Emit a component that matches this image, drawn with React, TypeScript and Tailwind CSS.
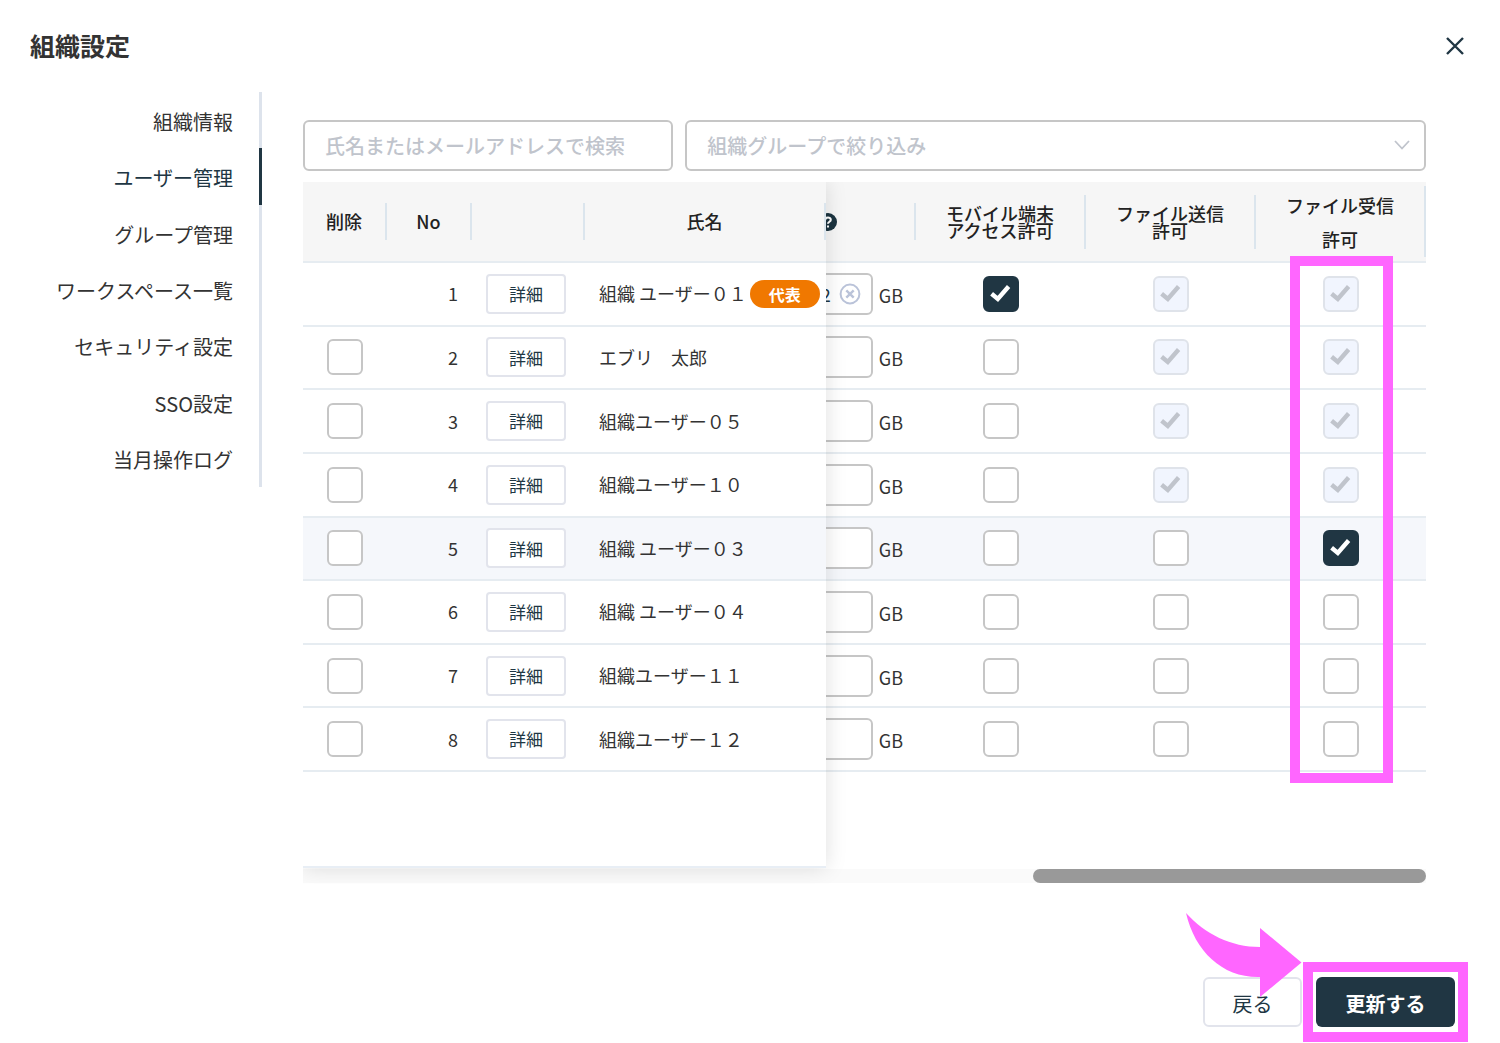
import { useState } from 'react';
import clsx from 'clsx';

type User = {
  no: number;
  name: string;
  owner?: boolean;
  capacity: string;
  mobile: boolean;
  send: boolean;
  receive: boolean;
  locked: boolean;
};

type Flag = 'mobile' | 'send' | 'receive';

const MENU = [
  '組織情報',
  'ユーザー管理',
  'グループ管理',
  'ワークスペース一覧',
  'セキュリティ設定',
  'SSO設定',
  '当月操作ログ',
];

const USERS: User[] = [
  { no: 1, name: '組織 ユーザー０１', owner: true, capacity: '2', mobile: true, send: true, receive: true, locked: true },
  { no: 2, name: 'エブリ　太郎', capacity: '', mobile: false, send: true, receive: true, locked: true },
  { no: 3, name: '組織ユーザー０５', capacity: '', mobile: false, send: true, receive: true, locked: true },
  { no: 4, name: '組織ユーザー１０', capacity: '', mobile: false, send: true, receive: true, locked: true },
  { no: 5, name: '組織 ユーザー０３', capacity: '', mobile: false, send: false, receive: true, locked: false },
  { no: 6, name: '組織 ユーザー０４', capacity: '', mobile: false, send: false, receive: false, locked: false },
  { no: 7, name: '組織ユーザー１１', capacity: '', mobile: false, send: false, receive: false, locked: false },
  { no: 8, name: '組織ユーザー１２', capacity: '', mobile: false, send: false, receive: false, locked: false },
];

const HOVERED = 5;

type CheckProps = {
  label: string;
  checked: boolean;
  disabled?: boolean;
  onChange: () => void;
};

function Check({ label, checked, disabled, onChange }: CheckProps) {
  return (
    <span className="relative inline-block size-9 align-middle">
      <input
        type="checkbox"
        aria-label={label}
        checked={checked}
        disabled={disabled}
        onChange={onChange}
        className="block size-9 appearance-none rounded-md border-2 border-[#c6c6c6] bg-white checked:border-[#203643] checked:bg-[#203643] disabled:border-[#dfe3ea] disabled:bg-[#f1f5fe]"
      />
      {checked && (
        <svg
          viewBox="0 0 36 36"
          className={clsx('pointer-events-none absolute inset-0', disabled ? 'text-[#c0c4cc]' : 'text-white')}
          fill="none"
          stroke="currentColor"
          strokeWidth="4.4"
        >
          <path d="M8.6 17.800 L14.800 23 L25.600 10.500" />
        </svg>
      )}
    </span>
  );
}

type HeadProps = {
  children?: React.ReactNode;
  className?: string;
};

function Head({ children, className }: HeadProps) {
  return (
    <th scope="col" className="h-[81px] border-b-2 border-[#e6ecf1] bg-[#f6f6f6] p-0 font-medium text-[#222]">
      <div className={clsx('flex items-center justify-center border-r-2 border-[#dbe5ed] text-center', className)}>
        {children}
      </div>
    </th>
  );
}

export default function App() {
  const [users, setUsers] = useState<User[]>(USERS);
  const [removed, setRemoved] = useState<number[]>([]);
  const [keyword, setKeyword] = useState('');

  function toggle(no: number, key: Flag) {
    setUsers(users.map((u) => (u.no === no ? { ...u, [key]: !u[key] } : u)));
  }

  function setCapacity(no: number, value: string) {
    setUsers(users.map((u) => (u.no === no ? { ...u, capacity: value } : u)));
  }

  function toggleRemoved(no: number) {
    setRemoved(removed.includes(no) ? removed.filter((n) => n !== no) : [...removed, no]);
  }

  function cell(no: number) {
    return clsx('border-b-2 border-[#e6ecf1] p-0', no === HOVERED ? 'bg-[#f5f7fb]' : 'bg-white');
  }

  return (
    <div className="min-h-screen bg-white font-['Noto_Sans_CJK_JP',sans-serif] text-[18px] text-[#333]">
      <header className="flex h-[92px] items-center justify-between pr-[35px] pl-[30px]">
        <h1 className="text-[25px] font-bold">組織設定</h1>
        <button type="button" aria-label="閉じる" className="text-[#203643]">
          <svg viewBox="0 0 20 20" className="size-5" fill="none" stroke="currentColor" strokeWidth="2.4">
            <path d="M2 2 L18 18 M18 2 L2 18" />
          </svg>
        </button>
      </header>

      <div className="flex items-start">
        <nav className="flex h-[395px] w-[262px] shrink-0 flex-col">
          {MENU.map((item) => (
            <a
              key={item}
              href="#"
              aria-current={item === 'ユーザー管理' ? 'page' : undefined}
              className={clsx(
                'flex flex-1 items-center justify-end border-r-3 pt-[3px] pr-[26px] text-[20px]',
                item === 'ユーザー管理' ? 'border-[#203643] text-[#203643]' : 'border-[#dde3ec]',
              )}
            >
              {item}
            </a>
          ))}
        </nav>

        <main className="min-w-0 flex-1 pt-7 pr-[74px] pl-[41px]">
          {/* Filters */}
          <div className="grid grid-cols-[1fr_2fr] gap-3 text-[20px]">
            <input
              type="text"
              aria-label="氏名またはメールアドレスで検索"
              placeholder="氏名またはメールアドレスで検索"
              value={keyword}
              onChange={(e) => setKeyword(e.target.value)}
              className="h-[51px] w-full min-w-0 rounded-md border-2 border-[#c6c6c6] px-5 font-medium placeholder:text-[#c0c4cc]"
            />
            <div className="relative min-w-0">
              <select
                aria-label="組織グループで絞り込み"
                className="h-[51px] w-full appearance-none rounded-md border-2 border-[#c6c6c6] bg-white px-5 font-medium text-[#c0c4cc]"
              >
                <option>組織グループで絞り込み</option>
              </select>
              <svg
                viewBox="0 0 16 10"
                className="pointer-events-none absolute top-5 right-4 h-[10px] w-4 text-[#c0c4cc]"
                fill="none"
                stroke="currentColor"
                strokeWidth="1.8"
              >
                <path d="M1 1 L8 8.500 L15 1" />
              </svg>
            </div>
          </div>

          <div className="relative mt-[11px] flex h-[686px]">
            {/* Fixed columns, the shadow falls only to the right and below */}
            <div className="z-10 w-[523px] shrink-0 border-b-2 border-[#e8eef5] bg-white shadow-[0_0_20px_rgba(0,0,0,0.13)] [clip-path:inset(0_-20px_-16px_0)]">
              <table className="h-[590px] w-full table-fixed border-separate border-spacing-0">
                <colgroup>
                  <col className="w-[84px]" />
                  <col className="w-[85px]" />
                  <col className="w-[113px]" />
                  <col />
                </colgroup>
                <thead>
                  <tr>
                    <Head className="h-[37px]">削除</Head>
                    <Head className="h-[37px]">No</Head>
                    <Head className="h-[37px]" />
                    <Head className="h-[37px]">氏名</Head>
                  </tr>
                </thead>
                <tbody>
                  {users.map((u) => (
                    <tr key={u.no}>
                      <td className={clsx(cell(u.no), 'text-center')}>
                        {!u.owner && (
                          <Check
                            label={`${u.name} 削除`}
                            checked={removed.includes(u.no)}
                            onChange={() => toggleRemoved(u.no)}
                          />
                        )}
                      </td>
                      <td className={cell(u.no)}>
                        <div className="pr-[14px] text-right">{u.no}</div>
                      </td>
                      <td className={cell(u.no)}>
                        <button
                          type="button"
                          className="ml-[14px] block h-10 w-20 rounded-sm border-2 border-[#e2e4ec] bg-white text-[17px] text-[#203643]"
                        >
                          詳細
                        </button>
                      </td>
                      <td className={cell(u.no)}>
                        <div className="flex items-center gap-[3px] pl-[14px] whitespace-nowrap">
                          {u.name}
                          {u.owner && (
                            <span className="flex h-7 w-[70px] items-center justify-center rounded-full bg-[#f07800] text-[16px] font-bold text-white">
                              代表
                            </span>
                          )}
                        </div>
                      </td>
                    </tr>
                  ))}
                </tbody>
              </table>
            </div>

            {/* Scrolled columns */}
            <div className="flex min-w-0 flex-1 justify-end overflow-hidden">
              <table className="h-[590px] w-full min-w-[680px] shrink-0 table-fixed border-separate border-spacing-0">
                <thead>
                  <tr>
                    <Head className="h-[37px]">
                      <svg viewBox="0 0 18 18" className="mr-[5px] size-[18px]" aria-label="ヘルプ">
                        <circle cx="9" cy="9" r="9" fill="#1c3440" />
                        <path
                          d="M6.200 7 C6.200 3.600 11.900 3.700 11.800 6.900 C11.700 8.800 9 8.800 9 10.800 M9 12.400 V14.600"
                          fill="none"
                          stroke="#fff"
                          strokeWidth="2"
                        />
                      </svg>
                    </Head>
                    <Head className="h-[54px] leading-[17px]">
                      モバイル端末
                      <br />
                      アクセス許可
                    </Head>
                    <Head className="h-[54px] leading-[17px]">
                      ファイル送信
                      <br />
                      許可
                    </Head>
                    <Head className="h-[71px] leading-[34px]">
                      ファイル受信
                      <br />
                      許可
                    </Head>
                  </tr>
                </thead>
                <tbody>
                  {users.map((u) => (
                    <tr key={u.no}>
                      <td className={cell(u.no)}>
                        <div className="flex items-center justify-end gap-[6px] pr-[13px]">
                          <div className="relative">
                            <input
                              type="text"
                              aria-label={`${u.name} 容量`}
                              value={u.capacity}
                              onChange={(e) => setCapacity(u.no, e.target.value)}
                              className="block h-[42px] w-[100px] rounded-md border-2 border-[#c6c6c6] bg-white pr-10 text-right text-[#203643]"
                            />
                            {u.capacity && (
                              <button
                                type="button"
                                aria-label="クリア"
                                onClick={() => setCapacity(u.no, '')}
                                className="absolute top-[10px] right-3 text-[#bac3d9]"
                              >
                                <svg viewBox="0 0 22 22" className="size-[22px]" fill="none" stroke="currentColor" strokeWidth="2">
                                  <circle cx="11" cy="11" r="9.4" />
                                  <path d="M7.300 7.300 L14.700 14.700 M14.700 7.300 L7.300 14.700" strokeWidth="2.4" />
                                </svg>
                              </button>
                            )}
                          </div>
                          <span className="pt-[3px]">GB</span>
                        </div>
                      </td>
                      <td className={clsx(cell(u.no), 'text-center')}>
                        <Check
                          label={`${u.name} モバイル端末アクセス許可`}
                          checked={u.mobile}
                          onChange={() => toggle(u.no, 'mobile')}
                        />
                      </td>
                      <td className={clsx(cell(u.no), 'text-center')}>
                        <Check
                          label={`${u.name} ファイル送信許可`}
                          checked={u.send}
                          disabled={u.locked}
                          onChange={() => toggle(u.no, 'send')}
                        />
                      </td>
                      <td className={clsx(cell(u.no), 'text-center')}>
                        <Check
                          label={`${u.name} ファイル受信許可`}
                          checked={u.receive}
                          disabled={u.locked}
                          onChange={() => toggle(u.no, 'receive')}
                        />
                      </td>
                    </tr>
                  ))}
                </tbody>
              </table>
            </div>

            {/* Highlight over the receive column */}
            <div className="pointer-events-none absolute top-[74px] right-[33px] z-20 h-[527px] w-[103px] border-10 border-[#ff66ff]" />
          </div>

          {/* Scroll bar */}
          <div className="mt-px flex h-[14px] justify-end bg-[#fafafa]">
            <div className="w-[35%] rounded-full bg-[#999]" />
          </div>
        </main>
      </div>

      <footer className="flex justify-end gap-[14px] pt-[94px] pr-[45px] pb-4">
        <div className="relative">
          <button
            type="button"
            className="block h-[50px] w-[99px] rounded-md border-2 border-[#e2e4ec] bg-white pt-[3px] text-[20px] text-[#203643]"
          >
            戻る
          </button>
          <svg
            viewBox="0 0 117 86"
            className="pointer-events-none absolute right-0 bottom-[29px] h-[86px] w-[117px]"
            fill="#ff66ff"
          >
            <path d="M1 1 C20 22 46 35 75 35 V16 L116.500 50.500 L75 85 V65 C38 66 10 40 1 1 Z" />
          </svg>
        </div>
        <div className="relative">
          <button
            type="button"
            className="block h-[50px] w-[139px] rounded-md bg-[#203643] pt-[3px] text-[20px] font-bold text-white"
          >
            更新する
          </button>
          <div className="pointer-events-none absolute -inset-x-[13px] -inset-y-[15px] border-10 border-[#ff66ff]" />
        </div>
      </footer>
    </div>
  );
}
